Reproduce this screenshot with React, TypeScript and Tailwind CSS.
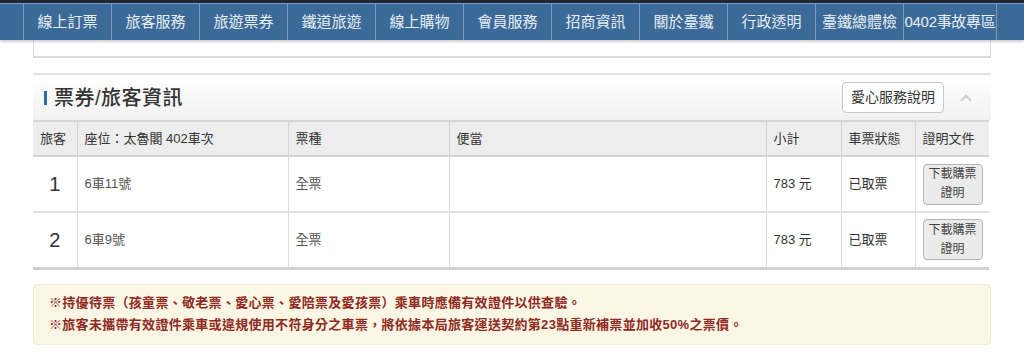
import { ChevronUp } from "lucide-react";

const navItems = [
  "線上訂票",
  "旅客服務",
  "旅遊票券",
  "鐵道旅遊",
  "線上購物",
  "會員服務",
  "招商資訊",
  "關於臺鐵",
  "行政透明",
  "臺鐵總體檢",
  "0402事故專區",
];

const passengers = [
  { no: "1", seat: "6車11號", type: "全票", price: "783 元", status: "已取票" },
  { no: "2", seat: "6車9號", type: "全票", price: "783 元", status: "已取票" },
];

export default function App() {
  return (
    <div className="w-[1024px] h-[364px] overflow-hidden bg-white font-['Liberation_Sans','Noto_Sans_CJK_TC',sans-serif] text-[#333]">
      {/* Top nav */}
      <div className="relative z-10 shadow-[0_2px_2px_rgba(0,0,0,0.18)]">
        <div className="h-[3px] bg-[#20262e]" />
        <div className="h-[1px] bg-[#6f9bd8]" />
        <div className="h-[36px] bg-[#3b6a98] flex pl-[23px]">
          {navItems.map((item, i) => (
            <div
              key={item}
              className={`h-full flex items-center justify-center border-l border-[#7d9cbc] text-[15px] text-[#e8eef5] ${
                i === navItems.length - 1 ? "w-[94px] border-r tracking-[-0.3px]" : "w-[88px]"
              }`}
            >
              {item}
            </div>
          ))}
        </div>
      </div>

      {/* Collapsed panel above */}
      <div className="mx-[33px] h-[18px] border-x border-b-2 border-[#dcdcdc] bg-white" />

      {/* Ticket / passenger panel */}
      <div className="mx-[33px] mt-[15px] border-t-2 border-[#e4e4e4]">
        <div className="h-[45px] flex items-center justify-between bg-gradient-to-b from-white to-[#f2f2f2] pl-[11px] pr-[16px]">
          <div className="flex items-center">
            <div className="w-[3px] h-[14px] bg-[#2f6aa8] mr-[7px]" />
            <span className="text-[20px] font-medium text-[#333] tracking-[0.5px]">票券/旅客資訊</span>
          </div>
          <div className="flex items-center gap-[13px]">
            <button className="h-[31px] w-[102px] rounded-[4px] border border-[#c8c8c8] bg-white text-[14px] text-[#333]">
              愛心服務說明
            </button>
            <ChevronUp size={18} strokeWidth={3} className="text-[#d0d0d0]" />
          </div>
        </div>

        <table className="w-[956px] border-collapse table-fixed text-[13px]">
          <colgroup>
            <col className="w-[44px]" />
            <col className="w-[211px]" />
            <col className="w-[161px]" />
            <col className="w-[317px]" />
            <col className="w-[75px]" />
            <col className="w-[74px]" />
            <col className="w-[74px]" />
          </colgroup>
          <thead>
            <tr className="h-[35px] bg-[#ededed] border-t-2 border-b-2 border-[#d6d6d6]">
              {["旅客", "座位：太魯閣 402車次", "票種", "便當", "小計", "車票狀態", "證明文件"].map((h, i) => (
                <th
                  key={h}
                  className={`text-left font-normal text-[#333] px-[7px] border-[#d6d6d6] ${i > 0 ? "border-l" : ""}`}
                >
                  {h}
                </th>
              ))}
            </tr>
          </thead>
          <tbody>
            {passengers.map((p, idx) => (
              <tr
                key={p.no}
                className={`h-[56px] ${idx === passengers.length - 1 ? "border-b-[3px] border-[#d0d0d0]" : "border-b-2 border-[#e0e0e0]"}`}
              >
                <td className="text-center text-[20px] font-light text-[#333]">{p.no}</td>
                <td className="px-[7px] border-l border-[#dcdcdc] text-[#555]">{p.seat}</td>
                <td className="px-[7px] border-l border-[#dcdcdc] text-[#555]">{p.type}</td>
                <td className="border-l border-[#dcdcdc]" />
                <td className="px-[7px] border-l border-[#dcdcdc] text-[#333]">{p.price}</td>
                <td className="px-[7px] border-l border-[#dcdcdc] text-[#333]">{p.status}</td>
                <td className="border-l border-[#dcdcdc] pl-[7px]">
                  <button className="w-[60px] h-[41px] rounded-[4px] border border-[#b4b4b4] bg-[#ebebeb] text-[12px] leading-[19px] text-[#444]">
                    下載購票
                    <br />
                    證明
                  </button>
                </td>
              </tr>
            ))}
          </tbody>
        </table>
      </div>

      {/* Notice */}
      <div className="mx-[33px] mt-[14px] h-[61px] rounded-[4px] border border-[#f3ead0] bg-[#fcf6e5] px-[15px] pt-[7px] text-[13px] font-bold leading-[22px] tracking-[0.3px] text-[#8e2a1f]">
        <p>※持優待票（孩童票、敬老票、愛心票、愛陪票及愛孩票）乘車時應備有效證件以供查驗。</p>
        <p>※旅客未攜帶有效證件乘車或違規使用不符身分之車票，將依據本局旅客運送契約第23點重新補票並加收50%之票價。</p>
      </div>
    </div>
  );
}
